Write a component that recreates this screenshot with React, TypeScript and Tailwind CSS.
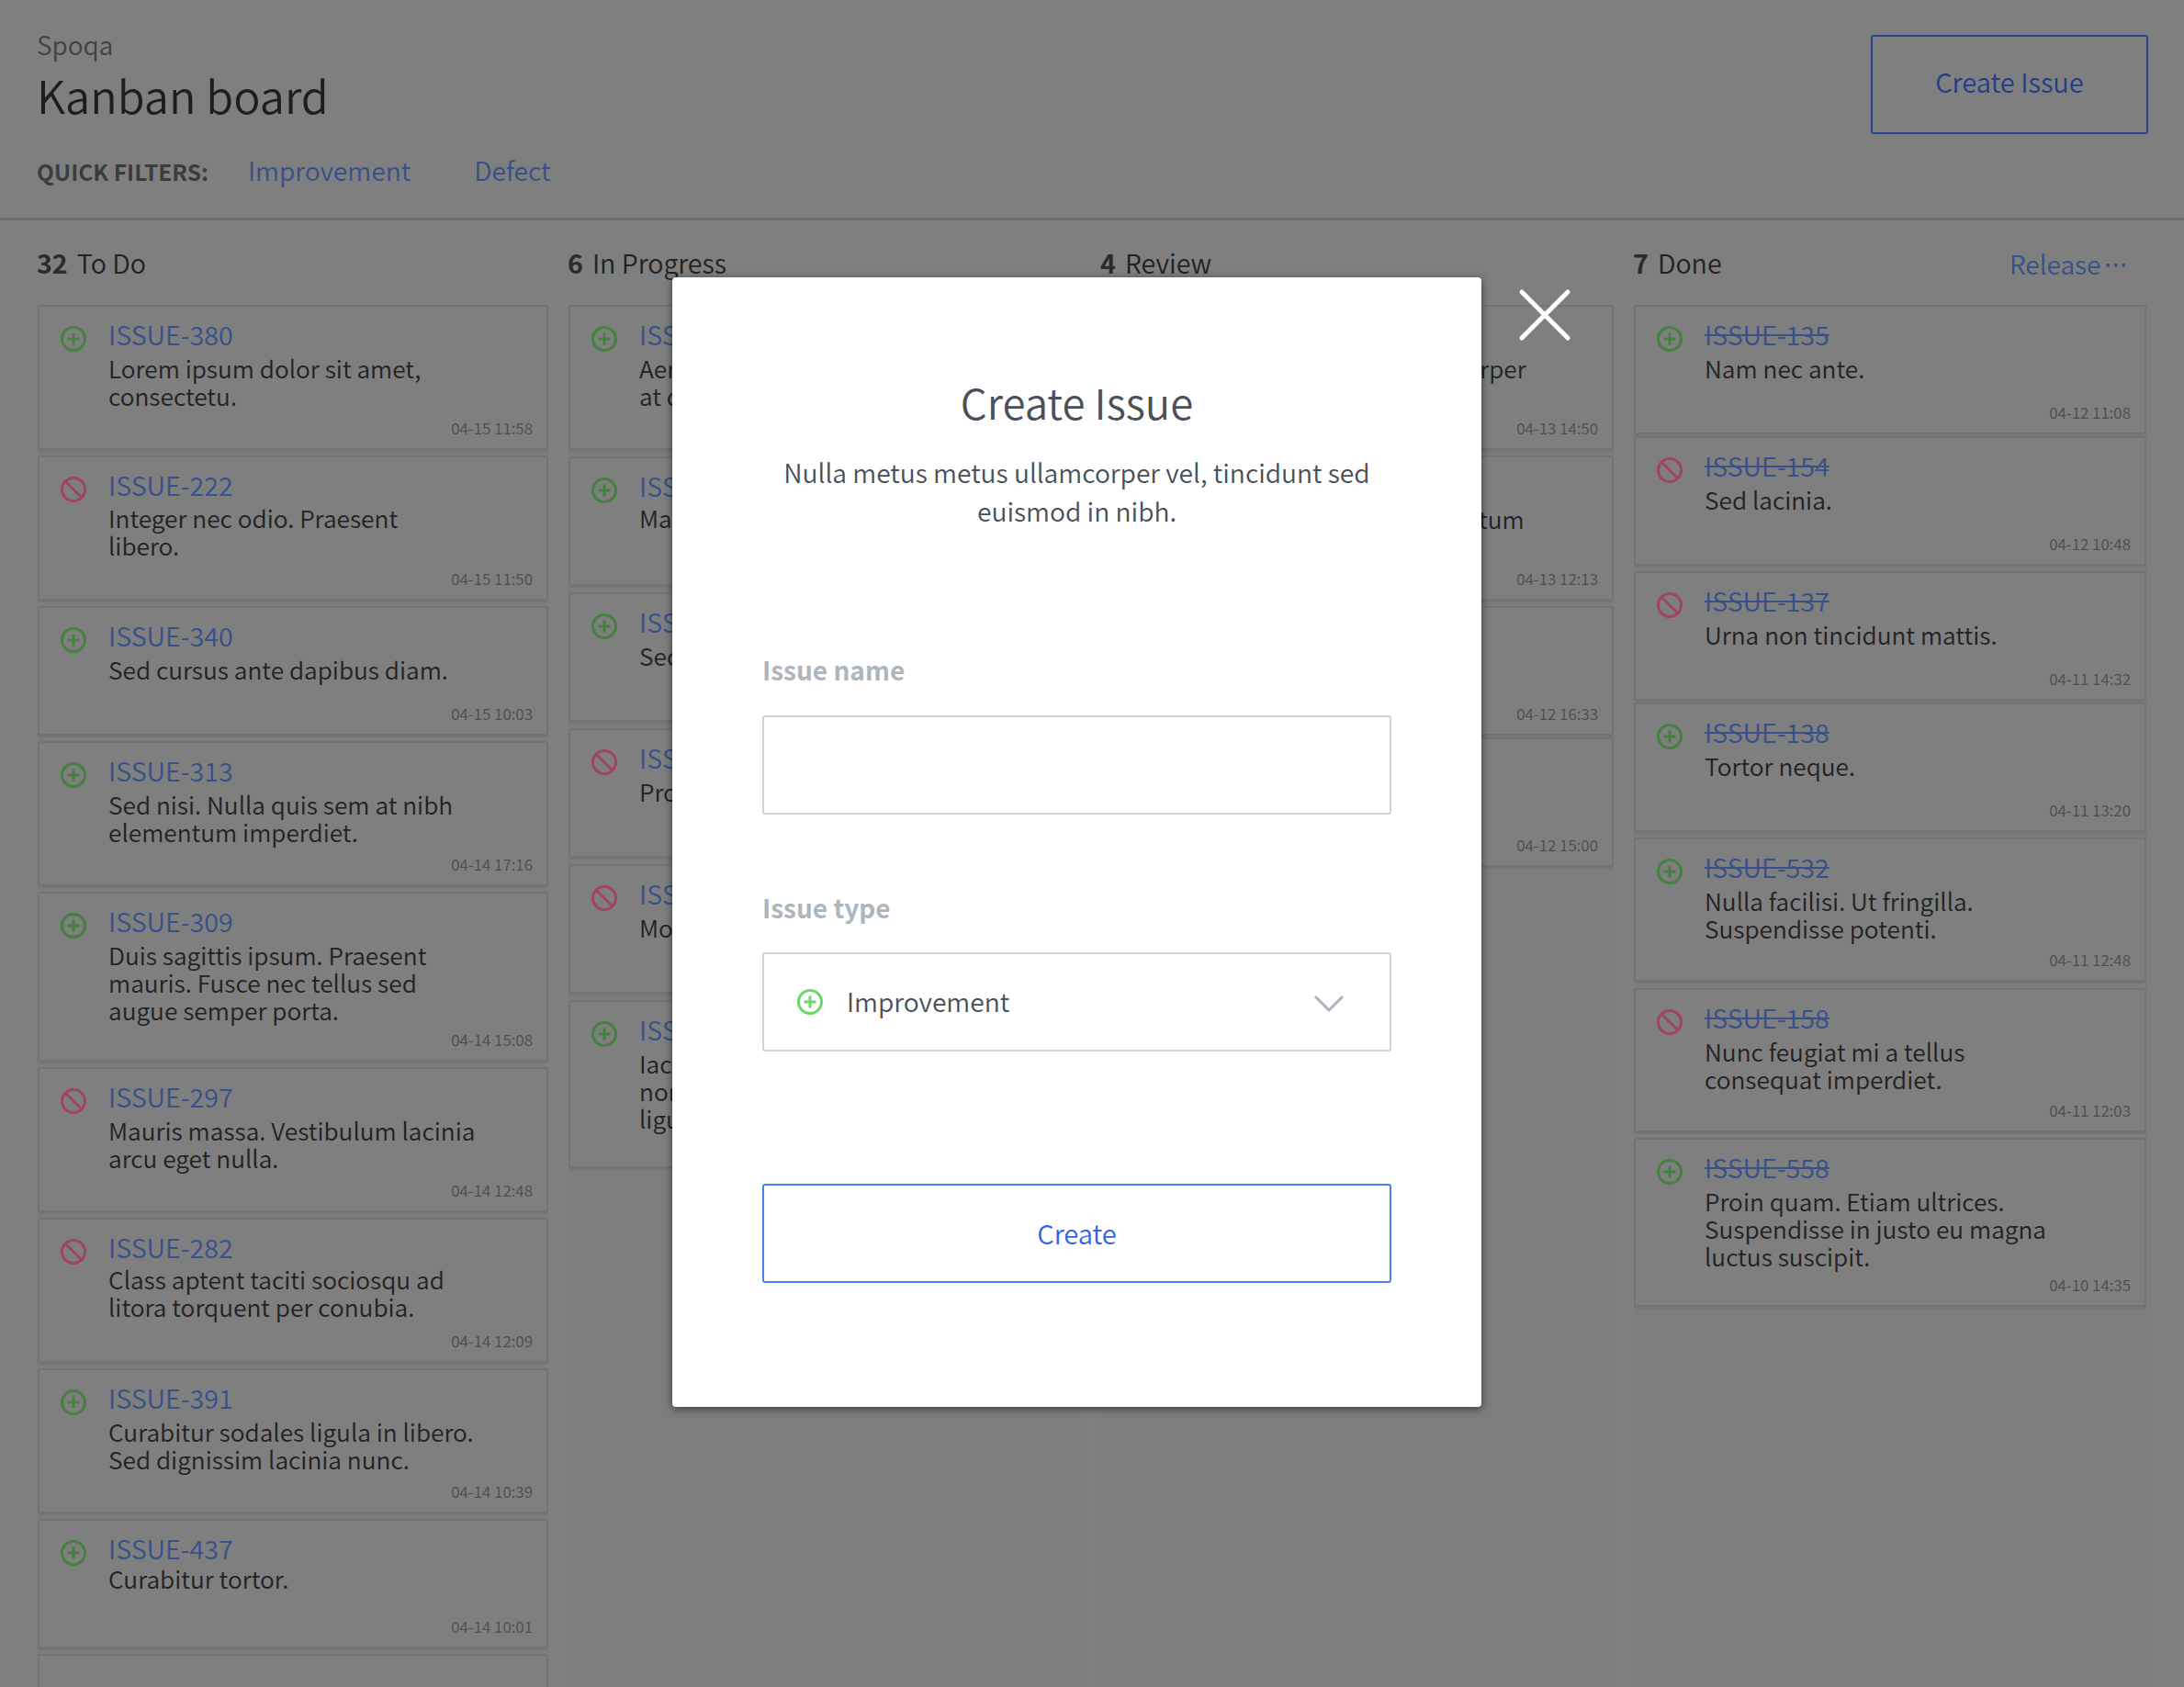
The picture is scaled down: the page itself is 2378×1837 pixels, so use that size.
type Issue = {
  id?: string;
  kind?: "plus" | "ban";
  lines?: string[];
  time?: string;
  box: string; // height and gap to the next card
  body?: string; // gap above the text, where a card differs
};

const toDo: Issue[] = [
  { id: "ISSUE-380", kind: "plus", lines: ["Lorem ipsum dolor sit amet,", "consectetu."], time: "04-15 11:58", box: "h-[158px] mb-[6px]" },
  { id: "ISSUE-222", kind: "ban", lines: ["Integer nec odio. Praesent", "libero."], time: "04-15 11:50", box: "h-[158px] mb-[6px]", body: "mt-[6px]" },
  { id: "ISSUE-340", kind: "plus", lines: ["Sed cursus ante dapibus diam."], time: "04-15 10:03", box: "h-[141px] mb-[6px]" },
  { id: "ISSUE-313", kind: "plus", lines: ["Sed nisi. Nulla quis sem at nibh", "elementum imperdiet."], time: "04-14 17:16", box: "h-[158px] mb-[6px]" },
  { id: "ISSUE-309", kind: "plus", lines: ["Duis sagittis ipsum. Praesent", "mauris. Fusce nec tellus sed", "augue semper porta."], time: "04-14 15:08", box: "h-[185px] mb-[6px]" },
  { id: "ISSUE-297", kind: "ban", lines: ["Mauris massa. Vestibulum lacinia", "arcu eget nulla."], time: "04-14 12:48", box: "h-[158px] mb-[6px]" },
  { id: "ISSUE-282", kind: "ban", lines: ["Class aptent taciti sociosqu ad", "litora torquent per conubia."], time: "04-14 12:09", box: "h-[158px] mb-[6px]", body: "mt-[5px]" },
  { id: "ISSUE-391", kind: "plus", lines: ["Curabitur sodales ligula in libero.", "Sed dignissim lacinia nunc."], time: "04-14 10:39", box: "h-[158px] mb-[6px]" },
  { id: "ISSUE-437", kind: "plus", lines: ["Curabitur tortor."], time: "04-14 10:01", box: "h-[141px] mb-[6px]", body: "mt-[3px]" },
  { box: "h-[141px]" },
];

const inProgress: Issue[] = [
  { id: "ISSUE-412", kind: "plus", lines: ["Aenean quam. In scelerisque", "at dolor."], time: "04-13 16:20", box: "h-[158px] mb-[7px]" },
  { id: "ISSUE-377", kind: "plus", lines: ["Maecenas mattis."], time: "04-13 15:02", box: "h-[141px] mb-[7px]", body: "mt-[5px]" },
  { id: "ISSUE-365", kind: "plus", lines: ["Sed convallis tristique sem."], time: "04-13 11:41", box: "h-[141px] mb-[7px]" },
  { id: "ISSUE-351", kind: "ban", lines: ["Proin ut ligula vel nunc."], time: "04-12 17:30", box: "h-[141px] mb-[7px]" },
  { id: "ISSUE-346", kind: "ban", lines: ["Morbi in ipsum sit amet."], time: "04-12 14:11", box: "h-[141px] mb-[7px]" },
  { id: "ISSUE-329", kind: "plus", lines: ["Iaculis nisi. Sed non", "non tortor sed augue", "ligula porta."], time: "04-12 10:26", box: "h-[183px]" },
];

const review: Issue[] = [
  { id: "ISSUE-402", kind: "plus", lines: ["Nulla sodales urna, ullamcorper"], time: "04-13 14:50", box: "h-[158px] mb-[6px]" },
  { id: "ISSUE-398", kind: "plus", lines: ["Vestibulum nec orci elementum"], time: "04-13 12:13", box: "h-[158px] mb-[6px]" },
  { id: "ISSUE-388", kind: "ban", lines: ["Nulla facilisi."], time: "04-12 16:33", box: "h-[141px] mb-[2px]" },
  { id: "ISSUE-384", kind: "plus", lines: ["Praesent libero."], time: "04-12 15:00", box: "h-[141px]" },
];

const done: Issue[] = [
  { id: "ISSUE-135", kind: "plus", lines: ["Nam nec ante."], time: "04-12 11:08", box: "h-[141px] mb-[2px]" },
  { id: "ISSUE-154", kind: "ban", lines: ["Sed lacinia."], time: "04-12 10:48", box: "h-[141px] mb-[6px]" },
  { id: "ISSUE-137", kind: "ban", lines: ["Urna non tincidunt mattis."], time: "04-11 14:32", box: "h-[141px] mb-[2px]" },
  { id: "ISSUE-138", kind: "plus", lines: ["Tortor neque."], time: "04-11 13:20", box: "h-[141px] mb-[6px]" },
  { id: "ISSUE-532", kind: "plus", lines: ["Nulla facilisi. Ut fringilla.", "Suspendisse potenti."], time: "04-11 12:48", box: "h-[157px] mb-[7px]" },
  { id: "ISSUE-158", kind: "ban", lines: ["Nunc feugiat mi a tellus", "consequat imperdiet."], time: "04-11 12:03", box: "h-[157px] mb-[6px]" },
  { id: "ISSUE-558", kind: "plus", lines: ["Proin quam. Etiam ultrices.", "Suspendisse in justo eu magna", "luctus suscipit."], time: "04-10 14:35", box: "h-[184px]" },
];

function PlusIcon({ color }: { color: string }) {
  return (
    <svg width="30" height="30" viewBox="0 0 30 30" fill="none" stroke={color} strokeWidth="3" className="shrink-0">
      <circle cx="15" cy="15" r="12.5" />
      <path d="M15 8.5v13M8.5 15h13" />
    </svg>
  );
}

function BanIcon({ color }: { color: string }) {
  return (
    <svg width="30" height="30" viewBox="0 0 30 30" fill="none" stroke={color} strokeWidth="3" className="shrink-0">
      <circle cx="15" cy="15" r="12.5" />
      <path d="M6.5 6.5l17 17" />
    </svg>
  );
}

function Card({ issue, struck }: { issue: Issue; struck?: boolean }) {
  if (!issue.id) {
    return <div className={`mx-px rounded-[3px] border-2 border-[#737373] bg-[#7f7f7f] ${issue.box}`} />;
  }
  return (
    <div className={`mx-px flex flex-col rounded-[3px] border-2 border-[#737373] bg-[#7f7f7f] pl-[22px] pr-[15px] pt-[15px] pb-[10px] shadow-[0_2px_0_#767676] ${issue.box}`}>
      <div className="flex gap-[23px]">
        <div className="pt-[5px]">
          {issue.kind === "plus" ? <PlusIcon color="#44813f" /> : <BanIcon color="#a04560" />}
        </div>
        <div>
          <div className={`text-[28.6px] leading-[30px] text-[#36508a] ${struck ? "line-through" : ""}`}>{issue.id}</div>
          <div className={`${issue.body ?? "mt-[7px]"} text-[26.25px] leading-[30px] text-[#222222]`}>
            {issue.lines?.map((l) => (
              <div key={l} className="whitespace-nowrap">{l}</div>
            ))}
          </div>
        </div>
      </div>
      <div className="mt-auto text-right text-[17px] leading-[24px] text-[#4d4d4d]">{issue.time}</div>
    </div>
  );
}

function Column({ count, title, items, struck, release }: { count: number; title: string; items: Issue[]; struck?: boolean; release?: boolean }) {
  return (
    <div className="flex min-h-0 flex-col">
      <div className="flex h-[92px] shrink-0 items-center justify-between pt-[1px] text-[28.6px] text-[#222222]">
        <div>
          <span className="mr-[10px] font-bold text-[#2b2b2b]">{count}</span>
          {title}
        </div>
        {release && (
          <span className="mr-[25px] text-[28px] text-[#36508a]">
            Release<span className="tracking-[-7px]">···</span>
          </span>
        )}
      </div>
      <div className="flex-1 bg-[#7c7e7d]">
        {items.map((it, i) => (
          <Card key={it.id ?? i} issue={it} struck={struck} />
        ))}
      </div>
    </div>
  );
}

export default function App() {
  return (
    <div className="relative h-[1837px] w-full overflow-hidden bg-[#7f7f7f] font-[350] font-['Noto_Sans_CJK_KR','Noto_Sans',sans-serif]">
      {/* header */}
      <div className="flex h-[240px] justify-between border-b-[3px] border-[#6e6e6e] pl-10 pr-[39px]">
        <div>
          <div className="pt-[30px] text-[28px] leading-[36px] text-[#414141]">Spoqa</div>
          <h1 className="mt-[5px] text-[48.7px] leading-[64px] text-[#1e1e1e]">Kanban board</h1>
          <div className="mt-[32px] flex items-center text-[28.2px] leading-[36px]">
            <span className="mr-[43px] pt-[3px] text-[24.5px] leading-[30px] font-bold text-[#3c3c3c]">QUICK FILTERS:</span>
            <span className="mr-[69px] text-[#36508a]">Improvement</span>
            <span className="text-[#36508a]">Defect</span>
          </div>
        </div>
        <button className="mt-[38px] h-[108px] w-[302px] rounded-[3px] border-2 border-[#25458f] pb-[6px] text-[29px] text-[#1f3d8c]">
          Create Issue
        </button>
      </div>

      {/* board */}
      <div className="grid h-[1597px] grid-cols-[558px_560px_560px_560px] gap-x-5 pl-10">
        <Column count={32} title="To Do" items={toDo} />
        <Column count={6} title="In Progress" items={inProgress} />
        <Column count={4} title="Review" items={review} />
        <Column count={7} title="Done" items={done} struck release />
      </div>

      {/* create issue modal */}
      <div className="absolute left-[732px] top-[302px] h-[1230px] w-[881px] rounded-[4px] bg-white px-[98px] pt-[105px] shadow-[0_2px_10px_rgba(0,0,0,0.55)]">
        <h2 className="text-center text-[45.5px] leading-[60px] text-[#495057]">Create Issue</h2>
        <p className="mt-[26px] text-center text-[28.2px] leading-[42px] text-[#495057]">
          Nulla metus metus ullamcorper vel, tincidunt sed
          <br />
          euismod in nibh.
        </p>
        <div className="mt-[134px] text-[28px] font-bold leading-[36px] text-[#adb5bd]">Issue name</div>
        <div className="mt-[32px] h-[108px] rounded-[3px] border-2 border-[#ced4da]" />
        <div className="mt-[83px] text-[28px] font-bold leading-[36px] text-[#adb5bd]">Issue type</div>
        <div className="mt-[31px] flex h-[108px] items-center rounded-[3px] border-2 border-[#ced4da] pl-[35px] pr-[49px]">
          <PlusIcon color="#6dd66a" />
          <span className="ml-[25px] flex-1 pb-[2px] text-[28.2px] text-[#495057]">Improvement</span>
          <svg width="34" height="20" viewBox="0 0 34 20" fill="none" stroke="#adb5bd" strokeWidth="3" className="mt-[4px]">
            <path d="M2 2l15 15L32 2" />
          </svg>
        </div>
        <button className="mt-[144px] h-[108px] w-full rounded-[3px] border-2 border-[#4a80f0] text-[29px] text-[#2f62ee]">
          Create
        </button>
      </div>

      {/* close */}
      <svg width="58" height="58" viewBox="0 0 58 58" fill="none" stroke="#ffffff" strokeWidth="5" strokeLinecap="round" className="absolute left-[1653px] top-[314px]">
        <path d="M4 4l50 50M54 4L4 54" />
      </svg>
    </div>
  );
}
